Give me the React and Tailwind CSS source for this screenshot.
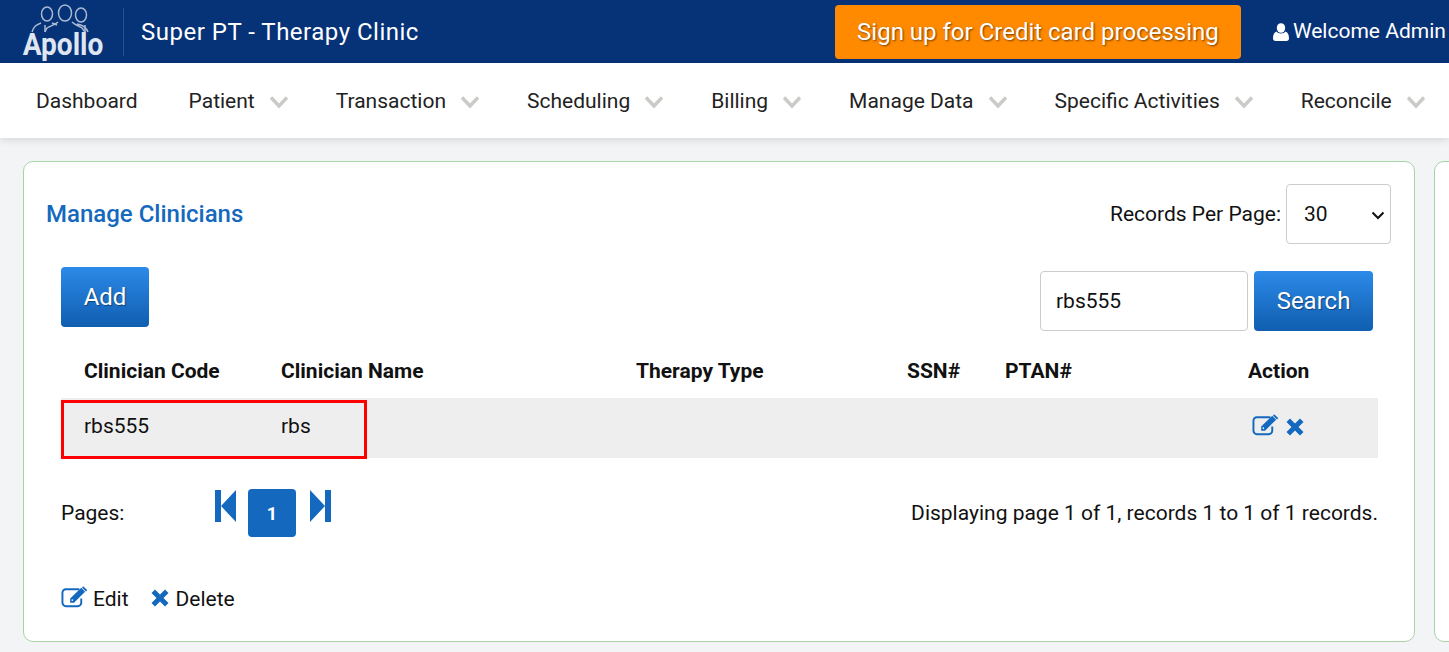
const NAV = [
  { label: "Dashboard" },
  { label: "Patient", menu: true },
  { label: "Transaction", menu: true },
  { label: "Scheduling", menu: true },
  { label: "Billing", menu: true },
  { label: "Manage Data", menu: true },
  { label: "Specific Activities", menu: true },
  { label: "Reconcile", menu: true },
];

function Chevron() {
  return (
    <svg width="20" height="14" viewBox="0 0 20 14" className="ml-[14px] text-[#c9cbc6]" fill="none" stroke="currentColor" strokeWidth="3.4">
      <path d="M2 2.500 10 11 18 2.500" />
    </svg>
  );
}

function Logo() {
  return (
    <svg width="84" height="63" viewBox="0 0 84 63" className="text-[#dfe6f2]">
      <g fill="none" stroke="currentColor" strokeWidth="1.500" opacity="0.75">
        <ellipse cx="26" cy="14" rx="5.500" ry="7" />
        <ellipse cx="44" cy="13" rx="6.500" ry="8" />
        <ellipse cx="60" cy="15" rx="5.500" ry="7" />
        <path d="M20 23c-5 2-7 3-9 9M31 23l5 2M37 22c-3 3-8 4-11 6l-2 4M51 22c3 3 7 4 10 6l3 4M56 24c6 1 9 3 11 8" />
        <path d="M24 25v7M64 25v7" />
      </g>
      <text transform="translate(42 55) scale(1.08 1.2)" textAnchor="middle" fill="currentColor" className="font-[Roboto,sans-serif] text-[26px] font-bold">
        Apollo
      </text>
    </svg>
  );
}

function SkipIcon({ flip }) {
  return (
    <svg width="21" height="32" viewBox="0 0 21 32" fill="#1469be" className={flip ? "ml-[2px] mt-[1px] rotate-180" : "mt-[1px]"}>
      <path d="M0 0h6v32H0zM6 16 21 0v32z" />
    </svg>
  );
}

function EditIcon({ className }) {
  return (
    <svg viewBox="0 0 28 22" className={className} fill="none">
      <path d="M21 12.500V17a3.500 3.500 0 0 1-3.500 3.500H5A3.500 3.500 0 0 1 1.500 17V6.500A3.500 3.500 0 0 1 5 3h14" stroke="#1469be" strokeWidth="2" />
      <path fill="#1469be" d="M9.500 12.500 21 1.500l4 4L13.500 17H9.500zM22.300.4l1-.4 3.800 3.700-.6 1.100-.6.500-4-4z" />
      <path fill="#fff" d="M11 13.500h1.500v1.500H11z" />
    </svg>
  );
}

function CrossIcon({ className }) {
  return (
    <svg viewBox="0 0 18 18" className={className} fill="#1469be">
      <path d="M4 .5 9 5.500l5-5L17.500 4l-5 5 5 5-3.500 3.500-5-5-5 5L.5 14l5-5-5-5z" />
    </svg>
  );
}

function UserIcon() {
  return (
    <svg viewBox="0 0 16 18" className="mr-[4px] h-[18px] w-[16px]" fill="#fff">
      <ellipse cx="8" cy="5" rx="4.200" ry="4.800" />
      <path d="M3.500 8.500C5 11 11 11 12.500 8.500 15 9.500 16 12 16 15.500c0 1.500-1 2.500-2.500 2.500h-11C1 18 0 17 0 15.500 0 12 1 9.500 3.500 8.500z" />
    </svg>
  );
}

export default function App() {
  const font = { fontFamily: "Roboto, sans-serif" };
  return (
    <div style={font} className="h-[652px] w-[1449px] overflow-hidden bg-[#f3f4f6] text-[#111]">
      <header className="flex h-[63px] items-center bg-[#063278] text-white">
        <div className="ml-[21px] w-[84px]">
          <Logo />
        </div>
        <div className="ml-[18px] h-[48px] w-px bg-[#2a4f8c]" />
        <div className="ml-[17px] whitespace-pre text-[24px] tracking-[0.5px]">Super PT - Therapy Clinic</div>
        <button className="ml-[416px] h-[54px] w-[406px] rounded-[4px] bg-[#ff8a00] text-[24px] text-white [text-shadow:1px_1px_2px_rgba(0,0,0,0.55)]">
          Sign up for Credit card processing
        </button>
        <div className="ml-[32px] flex items-center whitespace-nowrap text-[21px]">
          <UserIcon />
          Welcome Admin
        </div>
      </header>

      <nav className="relative flex h-[75px] items-center whitespace-nowrap bg-white pl-[36px] pt-[2px] text-[21px] text-[#222] shadow-[0_2px_8px_rgba(0,0,0,0.12)]">
        {NAV.map((item) => (
          <div key={item.label} className="mr-[47px] flex items-center first:mr-[51px]">
            {item.label}
            {item.menu ? <Chevron /> : null}
          </div>
        ))}
      </nav>

      <div className="flex gap-[19px] pl-[23px] pt-[23px]">
        <main className="h-[481px] w-[1392px] shrink-0 rounded-[10px] border border-[#a9d3a5] bg-white pl-[22px] pt-[22px]">
          <div className="flex h-[60px] items-center justify-between pr-[23px]">
            <h1 className="text-[24px] font-medium text-[#1469be]">Manage Clinicians</h1>
            <div className="flex items-center text-[21px]">
              <span className="pt-[2px]">Records Per Page:</span>
              <div className="relative ml-[5px] flex h-[60px] w-[105px] items-center rounded-[4px] border border-[#ccc] pl-[17px] pt-[2px]">
                30
                <svg width="14" height="9" viewBox="0 0 14 9" fill="none" stroke="#111" strokeWidth="2" className="absolute right-[5px] top-[26px]">
                  <path d="M1.500 1.500 7 7l5.500-5.500" />
                </svg>
              </div>
            </div>
          </div>

          <div className="ml-[15px] w-[1317px]">
            <div className="flex h-[64px] items-start justify-between pr-[5px] pt-[23px]">
              <button className="h-[60px] w-[88px] rounded-[4px] bg-gradient-to-b from-[#2c8ae8] to-[#0f5eb0] text-[24px] text-white [text-shadow:1px_1px_1px_rgba(0,0,0,0.4)]">
                Add
              </button>
              <div className="mt-[4px] flex gap-[6px]">
                <div className="flex h-[60px] w-[208px] items-center rounded-[4px] border border-[#ccc] pl-[15px] pt-[2px] text-[21px]">rbs555</div>
                <button className="h-[60px] w-[119px] rounded-[4px] bg-gradient-to-b from-[#2c8ae8] to-[#0f5eb0] text-[24px] text-white [text-shadow:1px_1px_1px_rgba(0,0,0,0.4)]">
                  Search
                </button>
              </div>
            </div>

            <div className="relative mt-[33px]">
              <table className="w-[1317px] table-fixed text-left text-[21px]">
                <colgroup>
                  <col className="w-[197px]" />
                  <col className="w-[355px]" />
                  <col className="w-[271px]" />
                  <col className="w-[98px]" />
                  <col className="w-[243px]" />
                  <col />
                </colgroup>
                <thead>
                  <tr className="h-[57px]">
                    <th className="pl-[23px] pt-[5px] font-bold">Clinician Code</th>
                    <th className="pl-[23px] pt-[5px] font-bold">Clinician Name</th>
                    <th className="pl-[23px] pt-[5px] font-bold">Therapy Type</th>
                    <th className="pl-[23px] pt-[5px] font-bold">SSN#</th>
                    <th className="pl-[23px] pt-[5px] font-bold">PTAN#</th>
                    <th className="pl-[23px] pt-[5px] font-bold">Action</th>
                  </tr>
                </thead>
                <tbody>
                  <tr className="h-[60px] bg-[#eee]">
                    <td className="pb-[3px] pl-[23px]">rbs555</td>
                    <td className="pb-[3px] pl-[23px]">rbs</td>
                    <td />
                    <td />
                    <td />
                    <td className="pb-[4px] pl-[27px]">
                      <div className="flex items-center gap-[7px]">
                        <EditIcon className="-mt-[2px] h-[22px] w-[27px]" />
                        <CrossIcon className="mt-[1px] h-[18px] w-[18px]" />
                      </div>
                    </td>
                  </tr>
                </tbody>
              </table>
              <div className="pointer-events-none absolute left-0 top-[59px] h-[59px] w-[306px] border-[3px] border-[#f00]" />
            </div>

            <div className="mt-[31px] flex h-[48px] items-center text-[21px]">
              <span className="w-[154px] pt-[2px]">Pages:</span>
              <div className="flex items-start gap-[12px] self-stretch">
                <SkipIcon />
                <div className="flex h-[48px] w-[48px] items-center justify-center rounded-[4px] bg-[#1469be] text-[18px] font-bold text-white">1</div>
                <SkipIcon flip />
              </div>
              <span className="ml-auto pt-[2px]">Displaying page 1 of 1, records 1 to 1 of 1 records.</span>
            </div>

            <div className="mt-[47px] flex items-center text-[21px]">
              <EditIcon className="-mt-[5px] mr-[5px] h-[22px] w-[27px]" />
              Edit
              <CrossIcon className="-mt-[3px] ml-[22px] mr-[7px] h-[18px] w-[18px]" />
              Delete
            </div>
          </div>
        </main>
        <aside className="h-[481px] w-[40px] shrink-0 rounded-l-[10px] border border-[#a9d3a5] bg-white" />
      </div>
    </div>
  );
}
